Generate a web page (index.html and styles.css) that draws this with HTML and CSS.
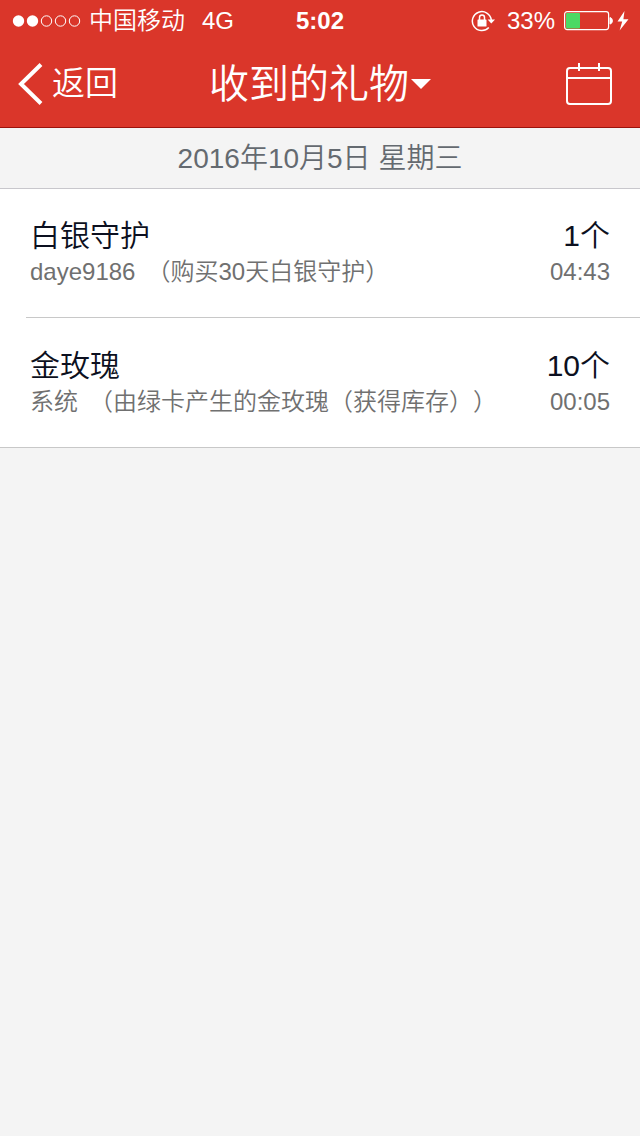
FILE: index.html
```html
<!DOCTYPE html>
<html lang="zh-CN">
<head>
<meta charset="utf-8">
<meta name="viewport" content="width=device-width, initial-scale=1">
<title>收到的礼物</title>
<link rel="stylesheet" href="styles.css">
</head>
<body>
<header class="header">
  <div class="status">
    <div class="status-left">
      <svg class="signal" width="70" height="14" viewBox="0 0 70 14" aria-hidden="true">
        <g fill="#fff"><circle cx="6.500" cy="7" r="5.700"/><circle cx="20.500" cy="7" r="5.700"/></g>
        <g fill="none" stroke="#fff" stroke-width="1"><circle cx="34.500" cy="7" r="5.200"/><circle cx="48.500" cy="7" r="5.200"/><circle cx="62.500" cy="7" r="5.200"/></g>
      </svg>
      <span class="carrier">中国移动</span>
      <span>4G</span>
    </div>
    <div class="clock">5:02</div>
    <div class="status-right">
      <svg class="lock" width="24" height="22" viewBox="0 0 24 22" aria-hidden="true">
        <path d="M17.800 17.600A9.500 9.500 0 1 1 20.300 10" fill="none" stroke="#fff" stroke-width="1.500"/>
        <path d="M16.600 9.400H24L20.300 13.600Z" fill="#fff"/>
        <rect x="6.500" y="9.500" width="9" height="7" rx="0.600" fill="#fff"/>
        <path d="M8.500 10V7.600a2.500 2.500 0 0 1 5 0V10" fill="none" stroke="#fff" stroke-width="1.500"/>
      </svg>
      <span>33%</span>
      <svg class="battery" width="66" height="20" viewBox="0 0 66 20" aria-hidden="true">
        <rect x="0.600" y="0.600" width="44" height="18" rx="2.500" fill="none" stroke="#fff" stroke-width="1.200"/>
        <rect x="2" y="2" width="14" height="15.400" rx="1" fill="#4cd964"/>
        <path d="M46 6.500a3.200 3.400 0 0 1 0 6.600Z" fill="#fff" stroke="#fff"/>
        <path d="M60.500 0 53.500 10.600h4.700L55.600 19.500 64.500 8.200h-5.100Z" fill="#fff"/>
      </svg>
    </div>
  </div>
  <nav class="nav">
    <button class="back" type="button">
      <svg width="25" height="42" viewBox="0 0 25 42" aria-hidden="true"><path d="M23 1.500 3 21 23 40.500" fill="none" stroke="#fff" stroke-width="4"/></svg>
      <span>返回</span>
    </button>
    <button class="title" type="button">
      <span>收到的礼物</span>
      <svg width="20" height="10" viewBox="0 0 20 10" aria-hidden="true"><path d="M0 0H20L10 10Z" fill="#fff"/></svg>
    </button>
    <button class="calendar" type="button" aria-label="选择日期">
      <svg width="46" height="42" viewBox="0 0 46 42" fill="none" stroke="#fff" stroke-width="2" aria-hidden="true"><rect x="1" y="5" width="44" height="36" rx="3"/><path d="M1 15H45M13 0V8M33 0V8"/></svg>
    </button>
  </nav>
</header>
<main>
  <h1 class="date">2016年10月5日 星期三</h1>
  <ul class="gifts">
    <li class="gift">
      <div class="line name"><span>白银守护</span><span>1个</span></div>
      <div class="line detail"><span class="from"><span>daye9186</span><span>（购买30天白银守护）</span></span><time>04:43</time></div>
    </li>
    <li class="gift">
      <div class="line name"><span>金玫瑰</span><span>10个</span></div>
      <div class="line detail"><span class="from"><span>系统</span><span>（由绿卡产生的金玫瑰（获得库存））</span></span><time>00:05</time></div>
    </li>
  </ul>
</main>
</body>
</html>
```
FILE: styles.css
```css
* {
  box-sizing: border-box;
}

body {
  margin: 0;
  background: #f4f4f4;
  font-family: "Liberation Sans", "Noto Sans CJK SC", sans-serif;
  font-weight: 350;
  text-spacing-trim: space-all;
}

button {
  padding: 0;
  border: 0;
  background: none;
  color: inherit;
  font: inherit;
}

svg {
  display: block;
  flex: none;
}

.header {
  background: #da362a;
  border-bottom: 1px solid #9c120c;
  color: #fff;
}

.status,
.nav {
  display: grid;
  grid-template-columns: 1fr auto 1fr;
  align-items: center;
}

.status {
  padding: 1px 12px 0;
  font-size: 24px;
  line-height: 40px;
}

.status-left,
.status-right {
  display: flex;
  align-items: center;
}

.status-right {
  justify-content: flex-end;
}

.carrier {
  margin: 0 17px 0 7px;
}

.clock {
  font-weight: 700;
}

.lock {
  margin-right: 12px;
}

.battery {
  margin-left: 9px;
  margin-right: -2px;
}

.nav {
  height: 86px;
  padding: 0 18px;
}

.back {
  display: flex;
  align-items: center;
  justify-self: start;
  gap: 9px;
  font-size: 33px;
  line-height: 48px;
}

.title {
  display: flex;
  align-items: center;
  gap: 2px;
  font-size: 40px;
  line-height: 56px;
}

.calendar {
  justify-self: end;
  margin-right: 10px;
}

.date {
  margin: 0;
  padding-top: 2px;
  border-bottom: 1px solid #c8c7cc;
  color: #646a70;
  font-size: 28px;
  font-weight: inherit;
  line-height: 58px;
  text-align: center;
}

.gifts {
  margin: 0;
  padding: 0;
  border-bottom: 1px solid #c8c8c8;
  background: #fff;
  list-style: none;
}

.gift {
  padding: 28px 30px;
}

.gift + .gift {
  background: linear-gradient(#c8c8c8, #c8c8c8) 26px 0 / 100% 1px no-repeat;
  padding-top: 30px;
}

.line {
  display: flex;
  justify-content: space-between;
}

.name {
  color: #0c1020;
  font-size: 30px;
  line-height: 38px;
}

.detail {
  color: #707070;
  font-size: 24px;
  line-height: 34px;
}

.from {
  display: flex;
  gap: 11px;
}
```
